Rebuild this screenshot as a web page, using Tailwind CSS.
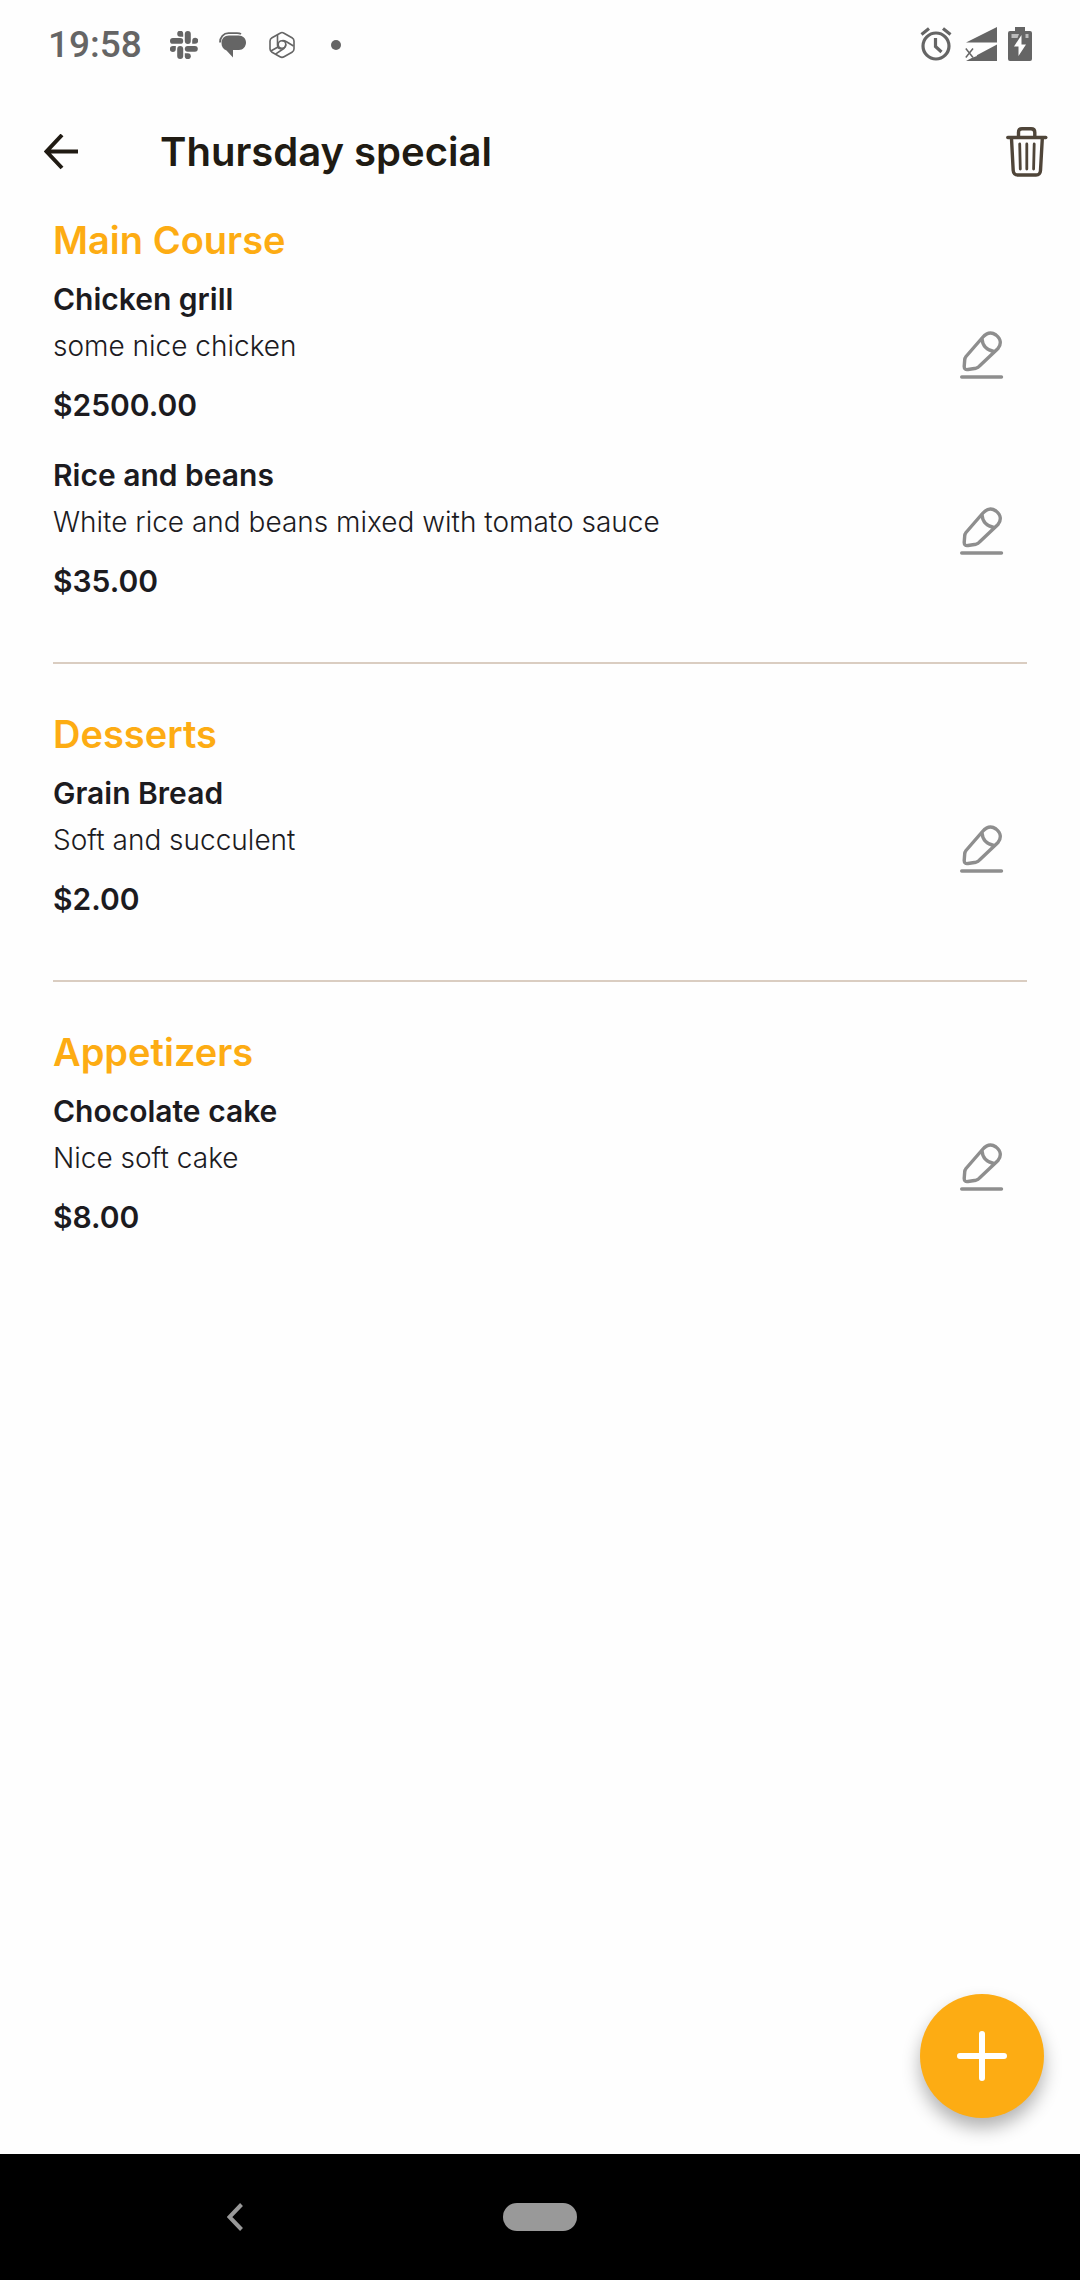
<!DOCTYPE html>
<html lang="en">
<head>
<meta charset="utf-8">
<meta name="viewport" content="width=device-width, initial-scale=1">
<title>Thursday special</title>
<script src="https://cdn.jsdelivr.net/npm/@tailwindcss/browser@4"></script>
</head>
<body class="flex min-h-screen flex-col bg-[#fefefe] font-['Inter',sans-serif] text-[#1c1b1f]">

<!-- Shared icon -->
<svg class="hidden" aria-hidden="true">
  <symbol id="edit" viewBox="0 0 44 48">
    <g fill="none" stroke="#8e8e8e" stroke-width="3.4" stroke-linecap="round" stroke-linejoin="round">
      <path d="M1.700 46H41.500"/>
      <path d="M6 25.500 L22.500 6.500 C26.500 2 31.500 .8 36 4 C41 8 41.500 13 38 17.500 L19.500 35 C18.500 36.200 17.500 36.800 16 37.200 L8 38.500 C5.500 39 4.200 37.800 4.200 35.500 L4.700 29 C4.800 27.500 5.200 26.500 6 25.500Z"/>
      <path d="M22 8 C22.500 14.500 27 19.500 34 20.500"/>
    </g>
  </symbol>
</svg>

<div class="flex h-[90px] items-center justify-between pl-12 pr-12 text-[#656565]">
  <div class="flex items-center">
    <span class="w-[122px] font-['Roboto',sans-serif] text-[37px] font-medium leading-10">19:58</span>
    <svg class="mr-5 size-7" viewBox="0 0 28 28" fill="currentColor" aria-hidden="true">
      <rect x="14.800" y="0" width="6" height="13" rx="3"/>
      <path d="M22.200 12.700V9.700a3 3 0 1 1 3 3Z"/>
      <rect x="14.800" y="14.900" width="13" height="5.800" rx="2.900"/>
      <path d="M14.800 22.200h3a3 3 0 1 1-3 3Z"/>
      <rect x="7.200" y="14.900" width="6" height="13" rx="3"/>
      <path d="M5.800 14.900v3a3 3 0 1 1-3-3Z"/>
      <rect x="0" y="7" width="13.200" height="5.800" rx="2.900"/>
      <path d="M13.200 5.700h-3a3 3 0 1 1 3-3Z"/>
    </svg>
    <svg class="mr-[22px] size-7" viewBox="0 0 28 28" fill="currentColor" aria-hidden="true">
      <path d="M11 4.500H20.500c4.500 0 7.500 3 7.500 7s-3 7.500-7 7.500H15v7.500L8.500 19.500C5 18 3.500 15.500 3.500 12 3.500 7.500 6.500 4.500 11 4.500Z"/>
      <path d="M2 11.500C2 6 5.500 2.200 10.500 2.200H19c1.500 0 3 .2 4 .9" fill="none" stroke="currentColor" stroke-width="1.800"/>
    </svg>
    <svg class="mr-[35px] size-7" viewBox="0 0 28 28" fill="none" stroke="currentColor" stroke-width="1.600" stroke-linejoin="round" aria-hidden="true">
      <path d="M12.500 2 4 6.800Q2 8 2 10V18Q2 20 4 21.200L12 25.800Q14 27 16 25.800L24 21.200Q26 20 26 18V10Q26 8 24 6.800L16 2.200Q14 1 12.500 2Z"/>
      <circle cx="14" cy="13.500" r="3.800"/>
      <path d="M9.500 4V14c0 2.500 1.500 3.800 3.500 3.800M14 9.700c1.500-.5 3 .1 4.500 1L25.500 15M17.800 13.500c0 2-.7 3-2 4L7.500 23.200M10 16 2.800 20"/>
    </svg>
    <svg class="size-2.5" viewBox="0 0 10 10" fill="currentColor" aria-hidden="true"><circle cx="5" cy="5" r="5"/></svg>
  </div>
  <div class="flex items-center">
    <svg class="mr-[13px] h-9 w-8" viewBox="0 0 32 36" fill="none" stroke="currentColor" stroke-width="3.200" aria-hidden="true">
      <circle cx="16" cy="19" r="13"/><path d="M15.500 11V19.500L21.500 25M1.500 7.500 9 1.500M30.500 7.500 23 1.500"/>
    </svg>
    <svg class="mr-[11px] h-9 w-8" viewBox="0 0 32 36" fill="currentColor" aria-hidden="true">
      <path d="M32 0V15.500H1ZM32 17.500V34H1Z"/>
      <path d="M0 19.500H8.500L12 29 0 33Z" fill="#fefefe"/>
      <path d="M.8 21.500 8 30.500M8 21.500.8 30.500" fill="none" stroke="currentColor" stroke-width="1.500"/>
    </svg>
    <svg class="h-9 w-6" viewBox="0 0 24 36" fill="currentColor" aria-hidden="true">
      <path d="M7 0h10v4h5q2 0 2 2V32q0 2-2 2H2q-2 0-2-2V6q0-2 2-2h5Z"/>
      <path d="M3.500 7H11L9.500 11H3.500ZM17.500 7H20.500V11H17.500Z" fill="#bcbcbc"/>
      <path d="M13.500 8 6 19.500h4.500V29L18 17.500H13.500Z" fill="#fefefe"/>
    </svg>
  </div>
</div>

<header class="flex h-[124px] items-center justify-between pl-11 pr-8 text-[#201b13]">
  <div class="flex items-center">
    <button type="button" aria-label="Back" class="mr-20">
      <svg class="h-9 w-9" viewBox="0 0 36 36" fill="none" stroke="currentColor" stroke-width="4"><path d="M34 17.500H3.500M18 1 2.500 17.500 18 34"/></svg>
    </button>
    <h1 class="text-[40px] font-semibold leading-12">Thursday special</h1>
  </div>
  <button type="button" aria-label="Delete menu">
    <svg class="h-[50px] w-[42px]" viewBox="0 0 42 50" fill="none" stroke="#4f4539" stroke-width="3.400" stroke-linecap="round" stroke-linejoin="round">
      <path d="M1.800 10.500H39.800"/>
      <path d="M12.500 9.500V5.500Q12.500 1.800 16 1.800H25Q28.800 1.800 28.800 5.500V9.500"/>
      <path d="M5.500 11.500 7.200 43.500Q7.500 48 12 48H30Q34.200 48 34.500 43.500L36.300 11.500"/>
      <path d="M13.700 17 14.300 42M20.800 17V42M28.200 17 27.600 42" stroke-width="2.800"/>
    </svg>
  </button>
</header>

<main class="relative grow px-[53px] pt-0.5">
  <section class="border-b-2 border-[#dacdc1] pb-[52px]">
    <h2 class="mb-3 text-[38px] font-semibold leading-12 text-[#fdac13]">Main Course</h2>
    <div class="flex flex-col gap-[18px]">
      <article class="flex items-center justify-between pr-[23px]">
        <div class="pb-1.5">
          <h3 class="text-[30px] font-semibold leading-[46px]">Chicken grill</h3>
          <p class="mt-1 text-[28px] font-light leading-10">some nice chicken</p>
          <p class="mt-4 text-[30px] font-semibold leading-[46px]">$2500.00</p>
        </div>
        <button type="button" aria-label="Edit Chicken grill"><svg class="h-12 w-11"><use href="#edit"/></svg></button>
      </article>
      <article class="flex items-center justify-between pr-[23px]">
        <div class="pb-1.5">
          <h3 class="text-[30px] font-semibold leading-[46px]">Rice and beans</h3>
          <p class="mt-1 text-[28px] font-light leading-10">White rice and beans mixed with tomato sauce</p>
          <p class="mt-4 text-[30px] font-semibold leading-[46px]">$35.00</p>
        </div>
        <button type="button" aria-label="Edit Rice and beans"><svg class="h-12 w-11"><use href="#edit"/></svg></button>
      </article>
    </div>
  </section>
  <section class="border-b-2 border-[#dacdc1] pb-[52px] pt-[46px]">
    <h2 class="mb-3 text-[38px] font-semibold leading-12 text-[#fdac13]">Desserts</h2>
    <article class="flex items-center justify-between pr-[23px]">
      <div class="pb-1.5">
        <h3 class="text-[30px] font-semibold leading-[46px]">Grain Bread</h3>
        <p class="mt-1 text-[28px] font-light leading-10">Soft and succulent</p>
        <p class="mt-4 text-[30px] font-semibold leading-[46px]">$2.00</p>
      </div>
      <button type="button" aria-label="Edit Grain Bread"><svg class="h-12 w-11"><use href="#edit"/></svg></button>
    </article>
  </section>
  <section class="pb-[52px] pt-[46px]">
    <h2 class="mb-3 text-[38px] font-semibold leading-12 text-[#fdac13]">Appetizers</h2>
    <article class="flex items-center justify-between pr-[23px]">
      <div class="pb-1.5">
        <h3 class="text-[30px] font-semibold leading-[46px]">Chocolate cake</h3>
        <p class="mt-1 text-[28px] font-light leading-10">Nice soft cake</p>
        <p class="mt-4 text-[30px] font-semibold leading-[46px]">$8.00</p>
      </div>
      <button type="button" aria-label="Edit Chocolate cake"><svg class="h-12 w-11"><use href="#edit"/></svg></button>
    </article>
  </section>
  <button type="button" aria-label="Add item" class="absolute bottom-9 right-9 flex size-[124px] items-center justify-center rounded-full bg-[#fdac13] shadow-[0_10px_18px_rgba(0,0,0,0.3)]">
    <svg class="size-[50px]" viewBox="0 0 50 50" stroke="#fff" stroke-width="6" stroke-linecap="round"><path d="M3 25H47M25 3V47"/></svg>
  </button>
</main>

<nav aria-label="System" class="grid h-[126px] grid-cols-[1fr_140px_1fr] items-center justify-items-center bg-black text-[#999]">
  <button type="button" aria-label="System back">
    <svg class="h-7 w-4" viewBox="0 0 16 28" fill="none" stroke="currentColor" stroke-width="4"><path d="M14.500 1.500 2.500 14 14.500 26.500"/></svg>
  </button>
  <button type="button" aria-label="Home" class="h-7 w-[74px] rounded-full bg-[#999]"></button>
</nav>
</body>
</html>
